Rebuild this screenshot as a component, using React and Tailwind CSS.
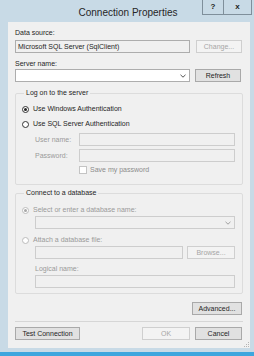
import React from 'react';

const Chevron = ({ color = '#555' }) => (
  <svg width="6" height="4" viewBox="0 0 6 4" className="shrink-0">
    <path d="M0.5 0.8 L3 3.2 L5.5 0.8" fill="none" stroke={color} strokeWidth="1" />
  </svg>
);

const Radio = ({ checked, disabled, label }) => (
  <div className="flex items-center h-[10px] gap-[4px]">
    <span
      className={`w-[7px] h-[7px] rounded-full border flex items-center justify-center bg-white ${
        disabled ? 'border-[#bcbcbc]' : 'border-[#333]'
      }`}
    >
      {checked && (
        <span className={`w-[3px] h-[3px] rounded-full ${disabled ? 'bg-[#a8a8a8]' : 'bg-[#222]'}`} />
      )}
    </span>
    <span className={disabled ? 'text-[#9a9a9a]' : 'text-[#1e1e1e]'}>{label}</span>
  </div>
);

const Btn = ({ children, disabled, className = '' }) => (
  <div
    className={`h-[13px] flex items-center justify-center border ${
      disabled ? 'border-[#cfcfcf] bg-[#f3f3f3] text-[#a6a6a6]' : 'border-[#a9a9a9] bg-[#e1e1e1] text-[#1e1e1e]'
    } ${className}`}
  >
    {children}
  </div>
);

const Field = ({ className = '', variant = 'white', children }) => {
  const look = {
    white: 'border-[#adadad] bg-white',
    readonly: 'border-[#adadad] bg-[#f0f0f0]',
    disabled: 'border-[#cdcdcd] bg-[#f0f0f0]',
  }[variant];
  return <div className={`h-[13px] border flex items-center px-[2px] ${look} ${className}`}>{children}</div>;
};

export default function App() {
  return (
    <div className="w-[254px] h-[356px] bg-[#c8dae6] flex flex-col overflow-hidden text-[7px] leading-[10px] text-[#1e1e1e] font-['Liberation_Sans',Arial,sans-serif]">
      {/* title bar */}
      <div className="h-[22px] flex relative">
        <div className="flex-1 flex items-center justify-center pt-[3px] pl-[2px] text-[10px] leading-[12px] text-[#262626]">
          Connection Properties
        </div>
        <div className="absolute right-[2px] top-0 flex">
          <div className="w-[21px] h-[15px] border-l border-b border-[#7f8f9b] flex items-center justify-center text-[8px] font-bold text-[#222]">
            ?
          </div>
          <div className="w-[29px] h-[15px] border-l border-r border-b border-[#7f8f9b] flex items-center justify-center text-[8px] font-bold text-[#222]">
            x
          </div>
        </div>
      </div>

      {/* client */}
      <div className="flex-1 ml-[8px] mr-[4px] bg-[#f0f0f0] pl-[7px] pr-[8px] pt-[6px] flex flex-col">
        <div>Data source:</div>
        <div className="mt-[2px] flex justify-between">
          <Field variant="readonly" className="w-[175px]">
            <span>Microsoft SQL Server (SqlClient)</span>
          </Field>
          <Btn disabled className="w-[46px]">Change...</Btn>
        </div>

        <div className="mt-[6px]">Server name:</div>
        <div className="flex justify-between">
          <Field className="w-[175px] justify-end pr-[3px]">
            <Chevron />
          </Field>
          <Btn className="w-[46px] mr-[1px]">Refresh</Btn>
        </div>

        <fieldset className="mt-[6px] border border-[#dcdcdc] rounded-[2px] pl-[6px] pr-[7px] pb-[9px] mr-[-1px]">
          <legend className="ml-[2px] px-[2px] leading-[10px]">Log on to the server</legend>
          <div className="mt-[6px]">
            <Radio checked label="Use Windows Authentication" />
          </div>
          <div className="mt-[5px]">
            <Radio label="Use SQL Server Authentication" />
          </div>
          <div className="mt-[4px] flex items-center pl-[13px]">
            <span className="w-[44px] text-[#9a9a9a]">User name:</span>
            <Field variant="disabled" className="flex-1" />
          </div>
          <div className="mt-[3px] flex items-center pl-[13px]">
            <span className="w-[44px] text-[#9a9a9a]">Password:</span>
            <Field variant="disabled" className="flex-1" />
          </div>
          <div className="mt-[3px] flex items-center pl-[57px] gap-[3px] h-[10px]">
            <span className="w-[8px] h-[8px] border border-[#c4c4c4] bg-white" />
            <span className="text-[#8c8c8c]">Save my password</span>
          </div>
        </fieldset>

        <fieldset className="mt-[3px] border border-[#dcdcdc] rounded-[2px] pl-[6px] pr-[7px] pb-[5px] mr-[-1px]">
          <legend className="ml-[2px] px-[2px] leading-[10px]">Connect to a database</legend>
          <div className="mt-[7px]">
            <Radio checked disabled label="Select or enter a database name:" />
          </div>
          <div className="mt-[1px] pl-[13px]">
            <Field variant="disabled" className="justify-end pr-[3px]">
              <Chevron color="#a0a0a0" />
            </Field>
          </div>
          <div className="mt-[6px]">
            <Radio disabled label="Attach a database file:" />
          </div>
          <div className="mt-[1px] pl-[13px] flex justify-between">
            <Field variant="disabled" className="w-[148px]" />
            <Btn disabled className="w-[48px]">Browse...</Btn>
          </div>
          <div className="mt-[5px] pl-[13px] text-[#9a9a9a]">Logical name:</div>
          <div className="mt-[1px] pl-[13px]">
            <Field variant="disabled" />
          </div>
        </fieldset>

        <div className="mt-[8px] flex justify-end">
          <Btn className="w-[50px]">Advanced...</Btn>
        </div>

        <div className="mt-[6px] border-t border-[#d6d6d6] mr-[-1px]" />

        <div className="mt-[5px] flex items-center">
          <Btn className="w-[65px]">Test Connection</Btn>
          <div className="flex-1" />
          <Btn disabled className="w-[48px]">OK</Btn>
          <Btn className="w-[47px] ml-[5px]">Cancel</Btn>
        </div>

        <div className="flex-1 flex items-end justify-end pb-[1px] mr-[-7px]">
          <svg width="5" height="5" viewBox="0 0 5 5">
            <rect x="4" y="0" width="1" height="1" fill="#b5b5b5" />
            <rect x="2" y="2" width="1" height="1" fill="#b5b5b5" />
            <rect x="4" y="2" width="1" height="1" fill="#b5b5b5" />
            <rect x="0" y="4" width="1" height="1" fill="#b5b5b5" />
            <rect x="2" y="4" width="1" height="1" fill="#b5b5b5" />
            <rect x="4" y="4" width="1" height="1" fill="#b5b5b5" />
          </svg>
        </div>
      </div>

      {/* bottom frame */}
      <div className="h-[4px] bg-[#c8dae6]" />
      <div className="h-[4px] bg-[#3ea6de]" />
    </div>
  );
}
